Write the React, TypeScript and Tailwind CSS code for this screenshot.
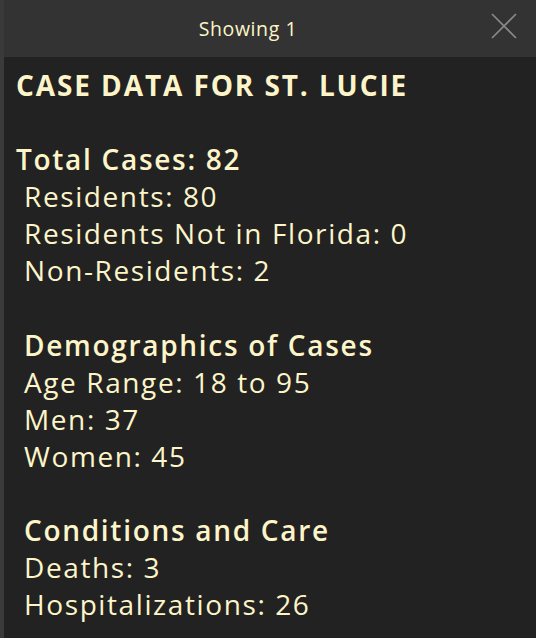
import React from "react";

const font = { fontFamily: "'Open Sans', Lato, sans-serif" };

export default function App() {
  const Line = ({ children, bold, indent, title }: { children?: React.ReactNode; bold?: boolean; indent?: boolean; title?: boolean }) => (
    <div
      className={`h-[37.1px] leading-[37px] whitespace-pre ${title ? "font-bold tracking-[1.9px]" : bold ? "font-semibold tracking-[1.7px]" : "font-normal tracking-[1.6px]"} ${indent ? "pl-[8px]" : ""}`}
    >
      {children}
    </div>
  );
  return (
    <div className="w-[536px] h-[638px] bg-[#222222] border-l-[4px] border-[#3a3a3a] flex flex-col overflow-hidden" style={font}>
      <div className="h-[57px] bg-[#333333] flex items-center justify-center relative shrink-0">
        <span className="text-[19.5px] tracking-[0.6px] text-[#fdf5c9] ml-[-44px]">Showing 1</span>
        <svg className="absolute left-[487px] top-[13px]" width="26" height="26" viewBox="0 0 26 26">
          <path d="M1 1 L25 25 M25 1 L1 25" stroke="#8a8a8a" strokeWidth="1.6" fill="none" />
        </svg>
      </div>
      <div className="pt-[10px] pl-[12px] text-[28px] text-[#fdf5c9]">
        <Line title>CASE DATA FOR ST. LUCIE</Line>
        <Line />
        <Line bold>Total Cases: 82</Line>
        <Line indent>Residents: 80</Line>
        <Line indent>Residents Not in Florida: 0</Line>
        <Line indent>Non-Residents: 2</Line>
        <Line />
        <Line bold indent>Demographics of Cases</Line>
        <Line indent>Age Range: 18 to 95</Line>
        <Line indent>Men: 37</Line>
        <Line indent>Women: 45</Line>
        <Line />
        <Line bold indent>Conditions and Care</Line>
        <Line indent>Deaths: 3</Line>
        <Line indent>Hospitalizations: 26</Line>
      </div>
    </div>
  );
}
